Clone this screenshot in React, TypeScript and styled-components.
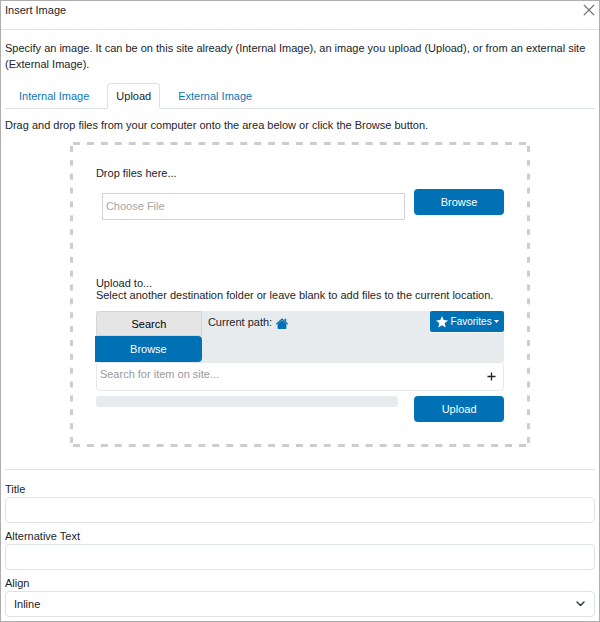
import React from "react";
import styled, { createGlobalStyle, css } from "styled-components";

const blue = "#0071b5";
const line = "#dee2e6";
const soft = "#e8ebee";

const GlobalStyle = createGlobalStyle`
  *, *::before, *::after { box-sizing: border-box; }
  body { margin: 0; background: #fff; }
  body, button, input, select {
    font-family: "Liberation Sans", Arial, sans-serif;
    font-size: 11px;
    color: #212529;
  }
`;

const Dialog = styled.main`
  min-height: 100vh;
  border: 1px solid #adadad;
  line-height: 16px;
`;

const Header = styled.header`
  display: flex;
  justify-content: space-between;
  align-items: flex-start;
  height: 29px;
  padding: 1px 4px 0;
  border-bottom: 1px solid ${line};
`;

const Heading = styled.h1`
  margin: 0;
  font-size: 11px;
  font-weight: 400;
  line-height: 16px;
`;

const CloseButton = styled.button`
  display: flex;
  padding: 2px 0;
  border: 0;
  background: none;
  cursor: pointer;
`;

const Body = styled.div`
  padding: 10px 4px 4px;
`;

const Text = styled.p`
  margin: 0;
`;

const Tabs = styled.div`
  display: flex;
  margin: 11px 0 8px;
  border-bottom: 1px solid ${line};
`;

const Tab = styled.button<{ $active?: boolean }>`
  height: 26px;
  margin-bottom: -1px;
  padding: 0 8px;
  border: 1px solid transparent;
  border-radius: 4px 4px 0 0;
  background: none;
  color: #0e76b8;
  cursor: pointer;
  &:not(:first-child) { margin-left: 9px; }
  &:first-child { padding-left: 13px; }
  ${(p) =>
    p.$active &&
    css`
      border-color: ${line} ${line} #fff;
      background: #fff;
      color: #212529;
    `}
`;

const dashX = "linear-gradient(90deg, transparent 25%, #cdcdcd 25% 70%, transparent 70%)";
const dashY = "linear-gradient(transparent 25%, #cdcdcd 25% 70%, transparent 70%)";

const DropZone = styled.section`
  width: 78%;
  margin: 9px auto 0;
  padding: 23px 26px 25px;
  border-radius: 3px;
  background-image: ${dashX}, ${dashX}, ${dashY}, ${dashY};
  background-size: 14px 3px, 14px 3px, 3px 14px, 3px 14px;
  background-position: 0 0, 0 100%, 0 0, 100% 0;
  background-repeat: round no-repeat, round no-repeat, no-repeat round, no-repeat round;
`;

const FileRow = styled.div`
  display: flex;
  align-items: flex-start;
  gap: 9px;
  margin: 8px 0 57px;
`;

const FileInput = styled.input`
  flex: 1;
  min-width: 0;
  height: 27px;
  margin: 4px 0 0 6px;
  padding: 0 3px 2px;
  border: 1px solid #cfd0da;
  border-radius: 1px;
  &::placeholder { color: #a5a5a5; opacity: 1; }
`;

const PrimaryButton = styled.button`
  flex: none;
  width: 90px;
  height: 26px;
  padding: 0;
  border: 0;
  border-radius: 4px;
  background: ${blue};
  color: #fff;
  cursor: pointer;
`;

const Destination = styled.p`
  margin: 0 0 10px;
  line-height: 12px;
`;

const PathPanel = styled.div`
  display: flex;
  align-items: flex-start;
  background: ${soft};
`;

const ModeGroup = styled.div`
  display: flex;
  flex-direction: column;
  width: 107px;
  margin-left: -1px;
`;

const ModeButton = styled.button<{ $active?: boolean }>`
  height: 26px;
  padding: 0;
  border: 0;
  border-radius: 0 4px 4px 0;
  background: ${blue};
  color: #fff;
  cursor: pointer;
  ${(p) =>
    p.$active &&
    css`
      height: 25px;
      margin-left: 1px;
      border: 1px solid #d2d6da;
      border-radius: 4px 0 0 0;
      background: #e5e5e5;
      color: #000;
    `}
`;

const Path = styled.div`
  display: flex;
  align-items: center;
  flex: 1;
  gap: 4px;
  padding: 3px 6px;
`;

const HomeLink = styled.a`
  display: flex;
  padding-top: 2px;
`;

const Favorites = styled.button`
  display: flex;
  align-items: center;
  justify-content: space-between;
  width: 74px;
  height: 21px;
  padding: 0 5px 0 6px;
  border: 0;
  border-radius: 2px;
  background: ${blue};
  color: #fff;
  font-size: 10px;
  box-shadow: 0 1px 0 #f7f8f9;
  cursor: pointer;
`;

const SearchBox = styled.div`
  display: flex;
  align-items: center;
  height: 29px;
  padding: 0 7px 0 3px;
  border: 1px solid #e6e9ec;
  border-radius: 4px;
`;

const SearchInput = styled.input`
  flex: 1;
  min-width: 0;
  height: 27px;
  padding: 0 0 5px;
  border: 0;
  outline: 0;
  &::placeholder { color: #999; opacity: 1; }
`;

const AddButton = styled.button`
  display: flex;
  padding: 0;
  border: 0;
  background: none;
  cursor: pointer;
`;

const UploadRow = styled.div`
  display: flex;
  align-items: flex-start;
  gap: 16px;
  margin-top: 5px;
`;

const Progress = styled.div`
  flex: 1;
  height: 11px;
  border-radius: 3px;
  background: ${soft};
`;

const Divider = styled.hr`
  height: 1px;
  margin: 22px 0 11px;
  border: 0;
  background: ${line};
`;

const Field = styled.div`
  display: flex;
  flex-direction: column;
  margin-bottom: 5px;
  &:last-child { margin-bottom: 0; }
`;

const control = css`
  width: 100%;
  height: 26px;
  padding: 0 8px;
  border: 1px solid ${line};
  border-radius: 4px;
  background: #fff;
`;

const TextInput = styled.input`
  ${control}
`;

const SelectWrap = styled.div`
  display: grid;
  align-items: center;
  > * { grid-area: 1 / 1; }
  > svg { justify-self: end; margin-right: 10px; pointer-events: none; }
`;

const Select = styled.select`
  ${control}
  appearance: none;
`;

export default function App() {
  return (
    <>
      <GlobalStyle />
      <Dialog>
        <Header>
          <Heading>Insert Image</Heading>
          <CloseButton type="button" aria-label="Close">
            <svg width="12" height="12" viewBox="0 0 12 12" fill="none" stroke="#666" strokeWidth="1.2">
              <path d="M.8.8l10.4 10.4M11.2.8L.8 11.2" />
            </svg>
          </CloseButton>
        </Header>
        <Body>
          <Text>
            Specify an image. It can be on this site already (Internal Image), an image you upload
            (Upload), or from an external site (External Image).
          </Text>
          <Tabs role="tablist">
            <Tab type="button" role="tab" aria-selected={false}>Internal Image</Tab>
            <Tab type="button" role="tab" aria-selected $active>Upload</Tab>
            <Tab type="button" role="tab" aria-selected={false}>External Image</Tab>
          </Tabs>
          <Text>Drag and drop files from your computer onto the area below or click the Browse button.</Text>
          <DropZone>
            <Text>Drop files here...</Text>
            <FileRow>
              <FileInput type="text" placeholder="Choose File" aria-label="Choose File" readOnly />
              <PrimaryButton type="button">Browse</PrimaryButton>
            </FileRow>
            <Destination>
              Upload to...
              <br />
              Select another destination folder or leave blank to add files to the current location.
            </Destination>
            <PathPanel>
              <ModeGroup>
                <ModeButton type="button" $active>Search</ModeButton>
                <ModeButton type="button">Browse</ModeButton>
              </ModeGroup>
              <Path>
                Current path:
                <HomeLink href="#" aria-label="Home">
                  <svg width="12" height="11" viewBox="0 0 12 11">
                    <path d="M1.6 5.8L6 2 10.4 5.8v4.5q0 .7-.7.7H2.3q-.7 0-.7-.7z" fill={blue} />
                    <path d="M.5 6L6 .9 11.5 6" fill="none" stroke={blue} strokeWidth="1.1" strokeLinecap="round" />
                    <path d="M8.6.8h1.6v3.4L8.6 2.7z" fill={blue} />
                  </svg>
                </HomeLink>
              </Path>
              <Favorites type="button">
                <svg width="12" height="12" viewBox="0 0 12 12" fill="#fff">
                  <path d="M6 0l1.7 4 4.3.4-3.3 2.8 1 4.4L6 9.3l-3.7 2.3 1-4.4L0 4.4 4.3 4z" />
                </svg>
                Favorites
                <svg width="5" height="3" viewBox="0 0 5 3" fill="#fff">
                  <path d="M0 0h5L2.5 3z" />
                </svg>
              </Favorites>
            </PathPanel>
            <SearchBox>
              <SearchInput type="text" placeholder="Search for item on site..." aria-label="Search for item on site" />
              <AddButton type="button" aria-label="Add">
                <svg width="9" height="9" viewBox="0 0 9 9" fill="none" stroke="#222" strokeWidth="1.3">
                  <path d="M4.5.5v8M.5 4.5h8" />
                </svg>
              </AddButton>
            </SearchBox>
            <UploadRow>
              <Progress role="progressbar" aria-label="Upload progress" aria-valuenow={0} />
              <PrimaryButton type="button">Upload</PrimaryButton>
            </UploadRow>
          </DropZone>
          <Divider />
          <Field>
            <label htmlFor="title">Title</label>
            <TextInput id="title" type="text" />
          </Field>
          <Field>
            <label htmlFor="alt">Alternative Text</label>
            <TextInput id="alt" type="text" />
          </Field>
          <Field>
            <label htmlFor="align">Align</label>
            <SelectWrap>
              <Select id="align" defaultValue="Inline">
                <option>Inline</option>
                <option>Left</option>
                <option>Right</option>
              </Select>
              <svg width="9" height="6" viewBox="0 0 9 6" fill="none" stroke="#343a40" strokeWidth="1.4" strokeLinecap="round" strokeLinejoin="round">
                <path d="M1 1l3.5 3.6L8 1" />
              </svg>
            </SelectWrap>
          </Field>
        </Body>
      </Dialog>
    </>
  );
}
